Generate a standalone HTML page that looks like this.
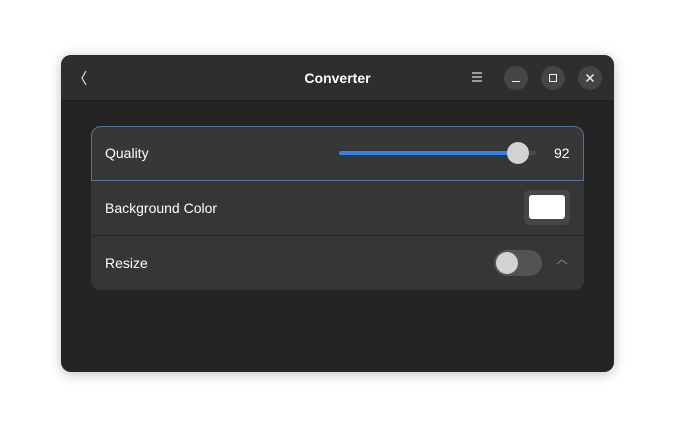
<!DOCTYPE html>
<html><head><style>
*{margin:0;padding:0;box-sizing:border-box}
body{width:675px;height:439px;background:#fff;font-family:"Liberation Sans",sans-serif;position:relative;overflow:hidden}
.win{position:absolute;left:61px;top:55px;width:553px;height:317px;background:#242424;border-radius:10px;overflow:hidden;box-shadow:0 2px 12px rgba(0,0,0,.25)}
.hdr{position:absolute;left:0;top:0;width:100%;height:46px;background:#2e2e2e;border-bottom:1px solid #1c1c1c}
.title{position:absolute;left:0;width:100%;top:15px;text-align:center;color:#fff;font-weight:bold;font-size:14px}
.btn{position:absolute;top:11px;width:24px;height:24px;border-radius:50%;background:#454545}
.card{position:absolute;left:30px;top:71px;width:493px;height:164px;background:#363636;border-radius:10px}
.row{position:absolute;left:0;width:100%;height:55px;color:#fff;font-size:14px}
.row span{position:absolute;left:14px;top:19px}
</style></head><body>
<div class="win">
 <div class="hdr">
  <svg style="position:absolute;left:18px;top:14px" width="10" height="18"><path d="M7 2 L3 9 L7 16" stroke="#ddd" stroke-width="1.2" fill="none"/></svg>
  <div class="title">Converter</div>
  <svg style="position:absolute;left:410px;top:16px" width="12" height="12"><path d="M1 2H11M1 6H11M1 10H11" stroke="#ddd" stroke-width="1.2"/></svg>
  <div class="btn" style="left:443px"><div style="position:absolute;left:8px;top:15px;width:8px;height:1.4px;background:#eee"></div></div>
  <div class="btn" style="left:480px"><div style="position:absolute;left:8px;top:8px;width:8px;height:8px;border:1.4px solid #eee"></div></div>
  <div class="btn" style="left:517px"><svg width="24" height="24"><path d="M8.5 8.5L15.5 15.5M15.5 8.5L8.5 15.5" stroke="#eee" stroke-width="1.5"/></svg></div>
 </div>
 <div class="card">
  <div class="row" style="top:0;border:1.5px solid #56739a;border-radius:10px 10px 0 0;background:#353739">
   <span style="left:13px;top:18px">Quality</span>
   <div style="position:absolute;left:247px;top:24px;width:197px;height:4px;border-radius:2px;background:#4a4a4a"></div>
   <div style="position:absolute;left:247px;top:24px;width:180px;height:4px;border-radius:2px;background:#3584e4"></div>
   <div style="position:absolute;left:415px;top:15px;width:22px;height:22px;border-radius:50%;background:#d2d2d2"></div>
   <div style="position:absolute;left:462px;top:18px">92</div>
  </div>
  <div class="row" style="top:55px;border-bottom:1px solid #262626">
   <span>Background Color</span>
   <div style="position:absolute;left:433px;top:9px;width:46px;height:35px;border-radius:6px;background:#464646"><div style="position:absolute;left:5px;top:5px;width:36px;height:24px;background:#fff;border-radius:3px"></div></div>
  </div>
  <div class="row" style="top:110px">
   <span>Resize</span>
   <div style="position:absolute;left:403px;top:14px;width:48px;height:26px;border-radius:13px;background:#545454"><div style="position:absolute;left:2px;top:2px;width:22px;height:22px;border-radius:50%;background:#d2d2d2"></div></div>
   <svg style="position:absolute;left:465px;top:22px" width="12" height="8"><path d="M1 6L6 2L11 6" stroke="#777" stroke-width="1.2" fill="none"/></svg>
  </div>
 </div>
</div>
</body></html>
